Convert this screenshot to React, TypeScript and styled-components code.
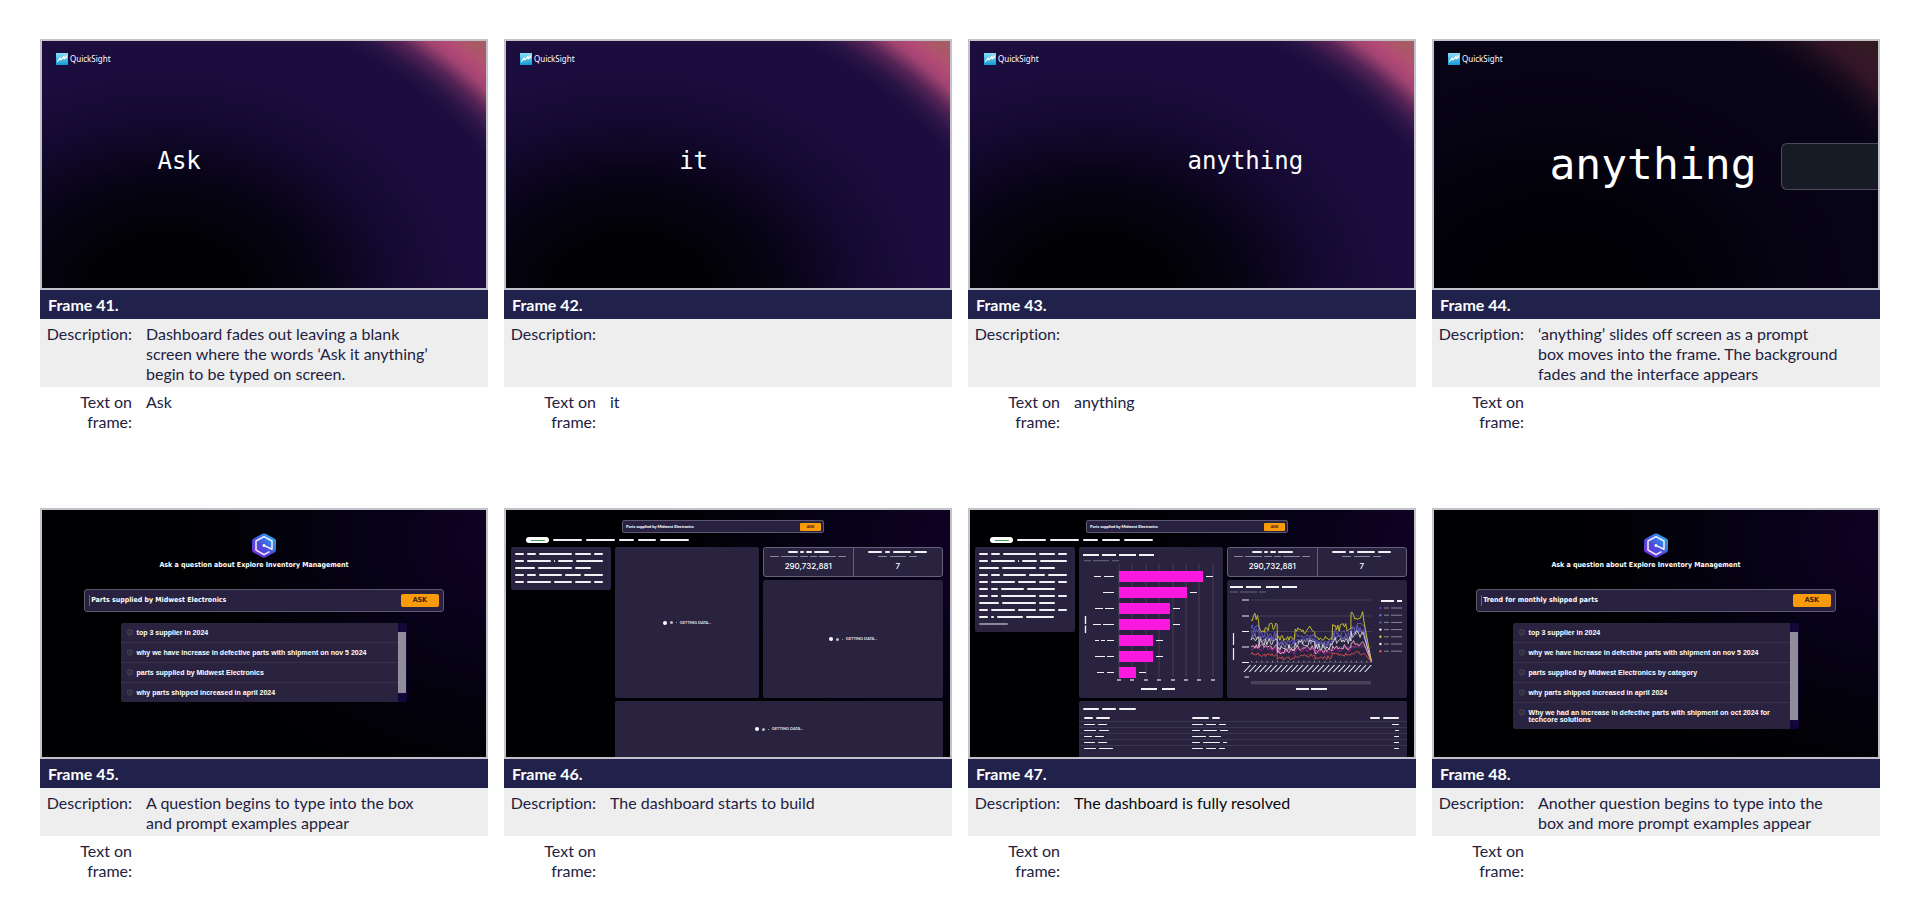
import React from "react";
import styled, { createGlobalStyle } from "styled-components";

const GlobalStyle = createGlobalStyle`
  *, *::before, *::after { box-sizing: border-box; }
  body { margin: 0; background: #fefefe; color: #22223f; font: 16px/20px Lato, "Open Sans", sans-serif; font-variant-ligatures: no-common-ligatures; }
  h2, h3, p, dl, dd, dt, ul { margin: 0; padding: 0; }
`;

const ui = `"DejaVu Sans Condensed", "DejaVu Sans", sans-serif`;
const mono = `"DejaVu Sans Mono", "Liberation Mono", monospace`;
const ink = "#f1f0f5";
const dim = "#8b879b";
const panelColor = "#29233f";

/* ---------- storyboard sheet ---------- */

const Sheet = styled.main`
  display: grid;
  grid-template-columns: repeat(4, minmax(0, 1fr));
  gap: 73px 16px;
  padding: 39px 40px 13px;
`;

const Card = styled.article`
  display: flex;
  flex-direction: column;
`;

const CardTitle = styled.h2`
  padding: 5px 8px 4px;
  background: #21224b;
  color: #fff;
  font-size: 16px;
  line-height: 20px;
  font-weight: 700;
`;

const Notes = styled.dl`
  display: flex;
  flex-direction: column;
`;

const Note = styled.div<{ $shaded?: boolean; $lines?: number }>`
  display: grid;
  grid-template-columns: 86px 1fr;
  column-gap: 14px;
  min-height: ${(p) => (p.$lines ?? 2) * 20 + 8}px;
  padding: 5px 8px 3px 6px;
  background: ${(p) => (p.$shaded ? "#eeeeef" : "transparent")};
`;

const NoteLabel = styled.dt`
  text-align: right;
`;

const NoteText = styled.dd<{ $dark?: boolean }>`
  white-space: pre-line;
  color: ${(p) => (p.$dark ? "#08080c" : "inherit")};
`;

/* ---------- frame pictures ---------- */

const Screen = styled.div<{ $kind: "glow" | "faded" | "night" }>`
  display: flex;
  flex-direction: column;
  aspect-ratio: 448 / 251;
  overflow: hidden;
  border: 2px solid #c3c1ca;
  color: #fff;
  background: ${(p) =>
    p.$kind === "night"
      ? "radial-gradient(ellipse 75% 110% at 104% 12%, #110126 0%, #070217 40%, #010104 85%, #000002 100%)"
      : `${p.$kind === "faded" ? "linear-gradient(rgba(0,0,6,.7), rgba(0,0,6,.7))," : ""}
         radial-gradient(ellipse 66% 92% at 28% 104%, #010103 25%, rgba(4,2,14,.85) 52%, rgba(12,5,35,.4) 80%, transparent 100%),
         radial-gradient(circle farthest-corner at 25% 160%, #190b3a 0%, #1b0d3e 84%, #2b1446 87%, #552455 90%, #a04372 93%, #b34a76 95%, #ad566b 97%, #a35d5f 100%)`};
`;

const Brand = styled.div`
  display: flex;
  align-items: center;
  gap: 2px;
  height: 12px;
  margin: 12px 14px 0;
  font: 8px/12px "Noto Sans", sans-serif;
`;

const Stage = styled.div<{ $left: number; $drop: number }>`
  display: flex;
  align-items: center;
  flex: 1;
  gap: 24px;
  padding: 0 0 ${(p) => p.$drop}px ${(p) => p.$left}%;
`;

const Word = styled.p<{ $large?: boolean }>`
  font: ${(p) => (p.$large ? "43px/47px" : "24px/28px")} ${mono};
  padding-bottom: ${(p) => (p.$large ? 4 : 0)}px;
`;

const SlidingBox = styled.div`
  flex: 1;
  height: 47px;
  border: 1px solid #4a4c5b;
  border-right: 0;
  border-radius: 6px 0 0 6px;
  background: #161b25;
`;

const AskPage = styled.div`
  display: flex;
  flex-direction: column;
  align-items: center;
  padding-top: 23px;
`;

const AskTitle = styled.h3`
  padding-right: 20px;
  margin: 2px 0 19px;
  font: 700 7px/10px ${ui};
`;

const AskForm = styled.form<{ $small?: boolean }>`
  display: flex;
  align-items: center;
  flex: none;
  width: ${(p) => (p.$small ? "63%" : "81%")};
  height: ${(p) => (p.$small ? 13 : 23)}px;
  padding: 0 ${(p) => (p.$small ? 2 : 4)}px;
  border: 1px solid #5d5870;
  border-radius: ${(p) => (p.$small ? 2 : 3)}px;
  background: #282240;
`;

const AskInput = styled.input<{ $small?: boolean }>`
  flex: 1;
  min-width: 0;
  height: ${(p) => (p.$small ? 8 : 11)}px;
  padding: 0 1px;
  border: 0;
  border-left: ${(p) => (p.$small ? "0" : "1px solid #6d687e")};
  outline: 0;
  background: transparent;
  color: #fff;
  font: ${(p) => (p.$small ? "900 4px/8px Lato, sans-serif" : `700 7px/11px ${ui}`)};
`;

const AskButton = styled.button<{ $small?: boolean }>`
  width: ${(p) => (p.$small ? 21 : 38)}px;
  height: ${(p) => (p.$small ? 8 : 13)}px;
  padding: 0;
  border: 0;
  border-radius: ${(p) => (p.$small ? 1 : 2)}px;
  background: #fb9a0b;
  color: #3a2108;
  font: ${(p) => (p.$small ? "900 4px/8px Lato, sans-serif" : `700 7px/13px ${ui}`)};
`;

const Suggestions = styled.div`
  display: flex;
  width: 64.6%;
  margin-top: 11px;
  border-radius: 2px;
  overflow: hidden;
`;

const SuggestionList = styled.ul`
  flex: 1;
  list-style: none;
  background: ${panelColor};
`;

const Suggestion = styled.li`
  display: flex;
  gap: 4px;
  padding: 6px 16px 6px 6px;
  font: 700 7px/7px "Liberation Sans", sans-serif;
  & + & { border-top: 1px solid #373248; }
  svg { flex: none; }
`;

const ScrollTrack = styled.div`
  display: flex;
  flex-direction: column;
  width: 9px;
  background: #130638;
`;

const ScrollArrow = styled.span`
  height: 9px;
  color: #3c2f66;
  font: 7px/9px ${ui};
  text-align: center;
`;

const ScrollThumb = styled.span`
  flex: 1;
  width: 8px;
  background: #918d9b;
`;

/* ---------- miniature dashboard ---------- */

const Dashboard = styled.div`
  display: flex;
  flex-direction: column;
  flex: 1;
  min-height: 0;
  padding: 10px 7px 0 5px;
`;

const SearchRow = styled.div`
  display: flex;
  padding-left: 111px;
`;

const Tabs = styled.div`
  display: flex;
  align-items: center;
  gap: 4px;
  height: 6px;
  margin: 4px 0 4px 15px;
`;

const ActiveTab = styled.span`
  display: flex;
  align-items: center;
  justify-content: center;
  width: 23px;
  height: 6px;
  border-radius: 3px;
  background: #fff;
  &::after { content: ""; width: 14px; height: 1px; background: #3f9a46; }
`;

const Board = styled.div`
  display: grid;
  grid-template-columns: 100fr 144fr 180fr;
  grid-template-rows: 151px minmax(0, 1fr);
  gap: 3px 4px;
  flex: 1;
  min-height: 0;
`;

const Panel = styled.section<{ $wide?: boolean }>`
  display: flex;
  flex-direction: column;
  flex: 1;
  min-height: 0;
  min-width: 0;
  overflow: hidden;
  border-radius: ${(p) => (p.$wide ? "2px 2px 0 0" : "2px")};
  background: ${panelColor};
  ${(p) => (p.$wide ? "grid-column: 2 / 4;" : "")}
  & > svg { display: block; width: 100%; height: 100%; }
`;

const Summary = styled.section`
  display: flex;
  flex-direction: column;
  align-self: start;
  gap: 5px;
  min-width: 0;
  padding: 6px 6px 7px 4px;
  border-radius: 2px;
  background: ${panelColor};
`;

const RightColumn = styled.div`
  display: flex;
  flex-direction: column;
  gap: 3px;
  min-height: 0;
`;

const Kpis = styled.section`
  display: flex;
  height: 30px;
  border: 1px solid #67627a;
  border-radius: 3px;
  background: ${panelColor};
`;

const Kpi = styled.div`
  display: flex;
  flex-direction: column;
  align-items: center;
  flex: 1 1 0;
  gap: 3px;
  padding-top: 3px;
  & + & { border-left: 1px solid #67627a; }
`;

const KpiValue = styled.strong`
  margin-top: 1px;
  font: 500 8px/10px Inter, sans-serif;
`;

const DashRow = styled.div<{ $gap?: number }>`
  display: flex;
  align-items: center;
  gap: ${(p) => p.$gap ?? 3}px;
`;

const Dash = styled.span<{ $w: number; $dim?: boolean; $thin?: boolean }>`
  width: ${(p) => p.$w}px;
  height: ${(p) => (p.$thin ? 1 : 2)}px;
  border-radius: 1px;
  background: ${(p) => (p.$dim ? dim : ink)};
`;

const Loading = styled.div`
  display: flex;
  align-items: center;
  justify-content: center;
  flex: 1;
  gap: 3px;
  font: 900 4px/6px Lato, sans-serif;
  color: #dcdae4;
`;

const Dot = styled.i<{ $size: number }>`
  width: ${(p) => p.$size}px;
  height: ${(p) => p.$size}px;
  border-radius: 50%;
  background: ${(p) => (p.$size > 3 ? "#fff" : "#b9b6c6")};
`;

const TableTitle = styled.div`
  padding: 7px 4px 5px;
`;

const DataTable = styled.table`
  width: 100%;
  border-collapse: collapse;
  table-layout: fixed;
  line-height: 0;
  th, td { height: 6px; padding: 0 8px 0 5px; }
  tr + tr td { border-top: 1px solid #3b364f; }
  th:nth-child(1) { width: 33%; }
  th:last-child > div, td:last-child > div { justify-content: flex-end; }
`;

/* ---------- drawings ---------- */

const QuickSightLogo = ({ id }: { id: string }) => (
  <svg width="12" height="12" viewBox="0 0 12 12" aria-hidden="true">
    <defs>
      <linearGradient id={id} x1="0" y1="0" x2="0" y2="1">
        <stop offset="0" stopColor="#8adcf7" />
        <stop offset="1" stopColor="#139bd6" />
      </linearGradient>
    </defs>
    <rect width="12" height="12" fill={`url(#${id})`} />
    <path d="M1 8.400 4.400 3.600 4.800 6 8.400 2 8.800 4.400 11.200 1.600V4.400L8.200 6.600 7.400 5.400 4.600 7.600 3.800 6.800 1 9.600Z" fill="#fff" />
  </svg>
);

const HexLogo = ({ id }: { id: string }) => (
  <svg width="24" height="25" viewBox="0 0 24 25" aria-hidden="true">
    <defs>
      <linearGradient id={id} x1="0" y1="1" x2=".9" y2="0">
        <stop offset="0" stopColor="#8a2be0" />
        <stop offset=".45" stopColor="#4d48dc" />
        <stop offset="1" stopColor="#25b4ee" />
      </linearGradient>
    </defs>
    <path
      d="M10.4.8Q12 0 13.6.8L22.4 5.4Q24 6.2 24 8V17Q24 18.800 22.400 19.600L13.600 24.300Q12 25 10.400 24.300L1.600 19.600Q0 18.800 0 17V8Q0 6.200 1.600 5.400Z"
      fill={`url(#${id})`}
    />
    <path d="M17.500 18.600 12 21.600 4 17.200V8L12 3.600 20 8V16.200L12.400 12.600" fill="none" stroke="#f3efff" strokeWidth="1.500" strokeLinejoin="round" />
    <circle cx="12" cy="12.500" r="1.500" fill="#fff" />
  </svg>
);

const Tick = () => (
  <svg width="6" height="7" viewBox="0 0 6 7" fill="none" stroke="#5c5a55" strokeWidth=".7" aria-hidden="true">
    <circle cx="3" cy="3.500" r="2.600" />
    <path d="M1.800 3.500 2.700 4.400 4.300 2.700" />
  </svg>
);

type Span = [number, number];

const HLines = ({ y, spans, color = ink, width = 2 }: { y: number; spans: Span[]; color?: string; width?: number }) => (
  <path d={spans.map(([a, b]) => `M${a} ${y}H${b}`).join("")} stroke={color} strokeWidth={width} fill="none" />
);

const bars: { end: number; label: Span[] }[] = [
  { end: 124, label: [[15, 22], [25, 35]] },
  { end: 108, label: [[24, 35]] },
  { end: 91, label: [[16, 24], [26, 35]] },
  { end: 91, label: [[14, 22], [24, 35]] },
  { end: 74, label: [[16, 20], [22, 26], [28, 35]] },
  { end: 74, label: [[16, 26], [28, 35]] },
  { end: 57, label: [[18, 25], [28, 35]] },
];
const barTicks = [40, 53, 67, 80, 94, 107, 120, 134];

const BarChart = () => (
  <svg viewBox="0 0 144 151" role="img" aria-label="Bar chart">
    <HLines y={8} spans={[[4, 20], [23, 37], [40, 57], [60, 75]]} />
    <HLines y={13.7} spans={[[5, 12], [14, 30], [33, 40]]} color="#6d6980" width={1} />
    {barTicks.map((x) => (
      <path key={x} d={`M${x} 17V130`} stroke="#4b465c" strokeWidth=".8" />
    ))}
    {bars.map((b, i) => (
      <g key={i}>
        <rect x="40" y={24 + i * 16} width={b.end - 40} height="11" fill="#fb19df" />
        <HLines y={29.5 + i * 16} spans={b.label} width={1.2} />
        <HLines y={29.5 + i * 16} spans={[[b.end + 3, b.end + 10]]} width={1.2} />
      </g>
    ))}
    <HLines y={133} spans={barTicks.map((x): Span => [x - 2, x + 2])} width={1.3} color="#c9c6d3" />
    <HLines y={142} spans={[[62, 78], [83, 96]]} />
    <path d="M6.500 69V77M6.500 78.500V86" stroke={ink} strokeWidth="1.400" />
  </svg>
);

const edges = [24, 32, 50.3, 68.3, 88, 105.7, 124, 138];
const series = [
  { color: "#8d86a8", amp: 3.4, levels: [57, 59, 65, 61, 65, 58, 52] },
  { color: "#645cc4", amp: 4.5, levels: [49, 55, 62, 56, 62, 53, 46] },
  { color: "#5f58c0", amp: 4.5, levels: [53, 57, 64, 60, 64, 57, 50] },
  { color: "#dedde6", amp: 3.6, levels: [58, 62, 68, 63, 67, 60, 54] },
  { color: "#b41ea4", amp: 2.6, levels: [68, 69, 72, 70, 72, 69, 66] },
  { color: "#f3a9c8", amp: 2.8, levels: [66, 67, 71, 68, 71, 67, 63] },
  { color: "#d9504f", amp: 2, levels: [74, 75, 78, 75.5, 77.5, 74.5, 73] },
  { color: "#cfc92c", amp: 5.5, levels: [38, 47, 58, 51.5, 58, 47, 37] },
];

const trace = (levels: number[], amp: number, seed: number) => {
  const points: string[] = [];
  levels.forEach((level, i) => {
    for (let x = edges[i]; x < edges[i + 1]; x += 1.3) {
      const n = Math.sin(x * 12.9898 + seed * 78.233) * 43758.5453;
      const noise = (n - Math.floor(n) - 0.5) * 2;
      const damp = level > 55 && amp > 4 ? 0.5 : 1;
      points.push(`${x.toFixed(1)} ${(level + noise * amp * damp).toFixed(1)}`);
    }
  });
  points.push("144.500 82");
  return `M${points.join("L")}`;
};

const legend = ["#7d2fa8", "#6f68cf", "#5d58a8", "#ffffff", "#d9d22c", "#f5eeda", "#e05a50"];
const yTicks = [20, 36, 51.5, 67, 82.5];
const xLabels = Array.from({ length: 24 }, (_, i) => 17 + i * 5.25);

const LineChart = () => (
  <svg viewBox="0 0 180 118" role="img" aria-label="Line chart">
    <HLines y={7} spans={[[3, 16], [19, 34], [39, 52], [55, 70]]} />
    <HLines y={12} spans={[[3, 11], [13, 30], [32, 39]]} color="#6d6980" width={1} />
    {yTicks.map((y) => (
      <g key={y}>
        <path d={`M24 ${y}H145`} stroke="#4b465c" strokeWidth=".8" />
        <HLines y={y} spans={[[15, 22]]} width={1.2} />
      </g>
    ))}
    {series.map((s, i) => (
      <path key={i} d={trace(s.levels, s.amp, i + 1)} fill="none" stroke={s.color} strokeWidth=".9" strokeLinejoin="round" />
    ))}
    <path d="M24 81.500H144" stroke="#a9a6b5" strokeWidth="1.500" strokeDasharray=".8 4.450" />
    <path d={xLabels.map((x) => `M${x} 92l6.500-7`).join("")} stroke={ink} strokeWidth="1.100" />
    <HLines y={97} spans={[[17.5, 22]]} width={1.2} />
    <rect x="24" y="101" width="120" height="3.500" fill="#474256" />
    <HLines y={109} spans={[[69, 82], [84, 100]]} />
    <path d="M6.500 53V65M6.500 68V80" stroke={ink} strokeWidth="1.200" />
    <HLines y={21} spans={[[154, 167], [170, 175]]} />
    {legend.map((c, i) => (
      <g key={i}>
        <circle cx="153.400" cy={28 + i * 7.2} r="1.200" fill={c} />
        <HLines y={28 + i * 7.2} spans={[[157, 162], [164, 175]]} color={dim} width={1} />
      </g>
    ))}
  </svg>
);

/* ---------- frame content ---------- */

const Dashes = ({ widths, gap, thin, dimmed }: { widths: number[]; gap?: number; thin?: boolean; dimmed?: boolean }) => (
  <DashRow $gap={gap}>
    {widths.map((w, i) => (
      <Dash key={i} $w={w} $thin={thin} $dim={dimmed} />
    ))}
  </DashRow>
);

const TitleFrame = ({ id, word, left, large }: { id: string; word: string; left: number; large?: boolean }) => (
  <Screen $kind={large ? "faded" : "glow"}>
    <Brand>
      <QuickSightLogo id={id} />
      QuickSight
    </Brand>
    <Stage $left={left} $drop={large ? 20 : 32}>
      <Word $large={large}>{word}</Word>
      {large && <SlidingBox />}
    </Stage>
  </Screen>
);

const AskBar = ({ query, small }: { query: string; small?: boolean }) => (
  <AskForm $small={small} onSubmit={(e) => e.preventDefault()}>
    <AskInput $small={small} defaultValue={query} aria-label="Question" />
    <AskButton $small={small}>ASK</AskButton>
  </AskForm>
);

const AskFrame = ({ id, query, prompts }: { id: string; query: string; prompts: string[] }) => (
  <Screen $kind="night">
    <AskPage>
      <HexLogo id={id} />
      <AskTitle>Ask a question about Explore Inventory Management</AskTitle>
      <AskBar query={query} />
      <Suggestions>
        <SuggestionList>
          {prompts.map((p) => (
            <Suggestion key={p}>
              <Tick />
              {p}
            </Suggestion>
          ))}
        </SuggestionList>
        <ScrollTrack>
          <ScrollArrow>˄</ScrollArrow>
          <ScrollThumb />
          <ScrollArrow>˅</ScrollArrow>
        </ScrollTrack>
      </Suggestions>
    </AskPage>
  </Screen>
);

const summaryLines = [
  [9, 9, 33, 16, 9],
  [9, 24, 1, 15, 27],
  [20, 34, 16],
  [9, 9, 23, 16, 19],
  [9, 24, 18, 16, 9],
  [9, 7, 23, 28],
  [9, 7, 35, 16, 9],
  [20, 34, 16],
  [9, 24, 18, 16, 9],
  [9, 3, 26, 28],
  [29],
];

const tableRows = [
  [[9, 14], [17, 8], [10, 16]],
  [[11, 9], [11, 10, 7], [7]],
  [[12, 10], [8, 14, 8], [4]],
  [[8, 9], [14, 12], [5]],
  [[11, 9], [8, 17, 4], [5]],
  [[12, 14], [11, 10, 6], [5]],
];

const LoadingData = () => (
  <Loading>
    <Dot $size={4} />
    <Dot $size={3} />
    <Dot $size={1} />
    GETTING DATA...
  </Loading>
);

const DashboardFrame = ({ loaded }: { loaded?: boolean }) => (
  <Screen $kind="night">
    <Dashboard>
      <SearchRow>
        <AskBar small query="Parts supplied by Midwest Electronics" />
      </SearchRow>
      <Tabs>
        <ActiveTab />
        <Dashes widths={[29, 29, 15, 18, 29]} gap={4} />
      </Tabs>
      <Board>
        <Summary>
          {summaryLines.slice(0, loaded ? 11 : 5).map((widths, i) => (
            <Dashes key={i} widths={widths} dimmed={i === 10} />
          ))}
        </Summary>
        <Panel>{loaded ? <BarChart /> : <LoadingData />}</Panel>
        <RightColumn>
          <Kpis>
            <Kpi>
              <Dashes widths={[10, 4, 6, 15]} gap={2} />
              <Dashes widths={[9, 17, 8, 7, 17, 8]} gap={2} thin dimmed />
              <KpiValue>290,732,881</KpiValue>
            </Kpi>
            <Kpi>
              <Dashes widths={[14, 5, 18, 13]} />
              <Dashes widths={[9, 16, 8]} thin dimmed />
              <KpiValue>7</KpiValue>
            </Kpi>
          </Kpis>
          <Panel>{loaded ? <LineChart /> : <LoadingData />}</Panel>
        </RightColumn>
        <Panel $wide>
          {loaded ? (
            <>
              <TableTitle>
                <Dashes widths={[16, 14, 17]} />
              </TableTitle>
              <DataTable>
                <tbody>
                  {tableRows.map((cells, r) => (
                    <tr key={r}>
                      {cells.map((widths, c) =>
                        r === 0 ? (
                          <th key={c} scope="col"><Dashes widths={widths} /></th>
                        ) : (
                          <td key={c}><Dashes widths={widths} thin /></td>
                        )
                      )}
                    </tr>
                  ))}
                </tbody>
              </DataTable>
            </>
          ) : (
            <LoadingData />
          )}
        </Panel>
      </Board>
    </Dashboard>
  </Screen>
);

/* ---------- storyboard data ---------- */

type Frame = { number: number; picture: React.ReactNode; description?: string; onFrame?: string; lines: number; dark?: boolean };

const commonPrompts = ["top 3 supplier in 2024", "why we have increase in defective parts with shipment on nov 5 2024"];

const frames: Frame[] = [
  {
    number: 41,
    lines: 3,
    picture: <TitleFrame id="qs41" word="Ask" left={26} />,
    description: "Dashboard fades out leaving a blank\nscreen where the words ‘Ask it anything’\nbegin to be typed on screen.",
    onFrame: "Ask",
  },
  { number: 42, lines: 3, picture: <TitleFrame id="qs42" word="it" left={39} />, onFrame: "it" },
  { number: 43, lines: 3, picture: <TitleFrame id="qs43" word="anything" left={49} />, onFrame: "anything" },
  {
    number: 44,
    lines: 3,
    picture: <TitleFrame id="qs44" word="anything" left={26} large />,
    description: "‘anything’ slides off screen as a prompt\nbox moves into the frame. The background\nfades and the interface appears",
  },
  {
    number: 45,
    lines: 2,
    picture: (
      <AskFrame
        id="hex45"
        query="Parts supplied by Midwest Electronics"
        prompts={[...commonPrompts, "parts supplied by Midwest Electronics", "why parts shipped increased in april 2024"]}
      />
    ),
    description: "A question begins to type into the box\nand prompt examples appear",
  },
  { number: 46, lines: 2, picture: <DashboardFrame />, description: "The dashboard starts to build" },
  { number: 47, lines: 2, picture: <DashboardFrame loaded />, description: "The dashboard is fully resolved", dark: true },
  {
    number: 48,
    lines: 2,
    picture: (
      <AskFrame
        id="hex48"
        query="Trend for monthly shipped parts"
        prompts={[
          ...commonPrompts,
          "parts supplied by Midwest Electronics by category",
          "why parts shipped increased in april 2024",
          "Why we had an increase in defective parts with shipment on oct 2024 for techcore solutions",
        ]}
      />
    ),
    description: "Another question begins to type into the\nbox and more prompt examples appear",
  },
];

export default function App() {
  return (
    <>
      <GlobalStyle />
      <Sheet>
        {frames.map((f) => (
          <Card key={f.number}>
            {f.picture}
            <CardTitle>Frame {f.number}.</CardTitle>
            <Notes>
              <Note $shaded $lines={f.lines}>
                <NoteLabel>Description:</NoteLabel>
                <NoteText $dark={f.dark}>{f.description}</NoteText>
              </Note>
              <Note>
                <NoteLabel>Text on frame:</NoteLabel>
                <NoteText>{f.onFrame}</NoteText>
              </Note>
            </Notes>
          </Card>
        ))}
      </Sheet>
    </>
  );
}
